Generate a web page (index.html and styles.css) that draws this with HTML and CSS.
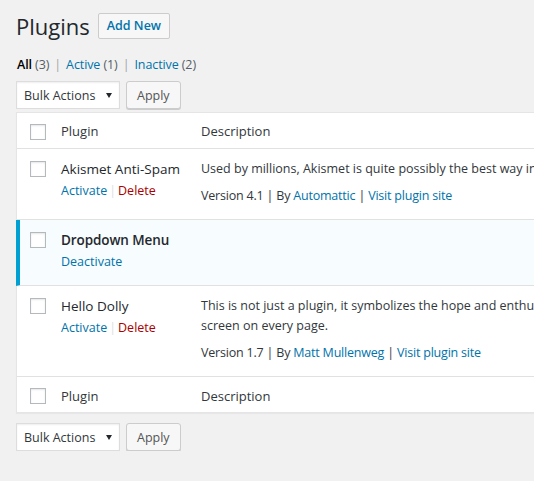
FILE: index.html
```html
<!DOCTYPE html>
<html lang="en">
<head>
<meta charset="utf-8">
<title>Plugins</title>
<link rel="stylesheet" href="styles.css">
</head>
<body>
<div class="wrap">
  <div class="page-head">
    <h1>Plugins</h1>
    <a class="page-title-action" href="#">Add New</a>
  </div>

  <ul class="subsubsub">
    <li><a class="current" href="#">All <span class="count">(3)</span></a><span class="sep">|</span></li>
    <li><a href="#">Active <span class="count">(1)</span></a><span class="sep">|</span></li>
    <li><a href="#">Inactive <span class="count">(2)</span></a></li>
  </ul>

  <div class="tablenav">
    <div class="select">
      <span>Bulk Actions</span>
      <svg class="arrow" width="6" height="5" viewBox="0 0 6 5"><polygon points="0,0 6,0 3,5" fill="#23282d"/></svg>
    </div>
    <button class="button" type="button">Apply</button>
  </div>

  <div class="plugins">
    <div class="row head">
      <div class="check"><input type="checkbox"></div>
      <div class="col-name">Plugin</div>
      <div class="col-desc">Description</div>
    </div>

    <div class="row">
      <div class="check"><input type="checkbox"></div>
      <div class="plugin-title">
        <strong>Akismet Anti-Spam</strong>
        <div class="row-actions"><a href="#">Activate</a><span class="sep">|</span><a class="delete" href="#">Delete</a></div>
      </div>
      <div class="desc">
        <p>Used by millions, Akismet is quite possibly the best way in the world to <strong class="plain">protect your blog from spam</strong>. It keeps your site protected even while you sleep. To get started: activate the Akismet plugin and then go to your Akismet Settings page to set up your API key.</p>
        <div class="version">Version 4.1 | By <a href="#">Automattic</a> | <a href="#">Visit plugin site</a></div>
      </div>
    </div>

    <div class="row active">
      <div class="check"><input type="checkbox"></div>
      <div class="plugin-title">
        <strong>Dropdown Menu</strong>
        <div class="row-actions"><a href="#">Deactivate</a></div>
      </div>
      <div class="desc"></div>
    </div>

    <div class="row">
      <div class="check"><input type="checkbox"></div>
      <div class="plugin-title">
        <strong>Hello Dolly</strong>
        <div class="row-actions"><a href="#">Activate</a><span class="sep">|</span><a class="delete" href="#">Delete</a></div>
      </div>
      <div class="desc">
        <p>This is not just a plugin, it symbolizes the hope and enthusiasm of an entire generation summed up in two words sung most famously by Louis Armstrong: Hello, Dolly. When activated you will randomly see a lyric from Hello, Dolly in the upper right of your admin<br>screen on every page.</p>
        <div class="version">Version 1.7 | By <a href="#">Matt Mullenweg</a> | <a href="#">Visit plugin site</a></div>
      </div>
    </div>

    <div class="row foot">
      <div class="check"><input type="checkbox"></div>
      <div class="col-name">Plugin</div>
      <div class="col-desc">Description</div>
    </div>
  </div>

  <div class="tablenav bottom">
    <div class="select">
      <span>Bulk Actions</span>
      <svg class="arrow" width="6" height="5" viewBox="0 0 6 5"><polygon points="0,0 6,0 3,5" fill="#23282d"/></svg>
    </div>
    <button class="button" type="button">Apply</button>
  </div>
</div>
</body>
</html>
```

FILE: styles.css
```css
html, body {
  margin: 0;
  overflow: hidden;
}

body {
  background: #f1f1f1;
  font-family: "Open Sans", "Noto Sans", sans-serif;
  font-size: 12.5px;
  color: #444;
}

a {
  color: #0073aa;
  text-decoration: none;
}

.wrap {
  padding: 12px 0 0 16px;
}

/* Title */
.page-head {
  display: flex;
  align-items: flex-start;
}

h1 {
  margin: 0;
  font-size: 22px;
  font-weight: 400;
  line-height: 29px;
  color: #23282d;
}

.page-title-action {
  margin: 1px 0 0 8px;
  padding: 4px 8px;
  line-height: 16px;
  border: 1px solid #ccc;
  border-radius: 2px;
  background: #f7f7f7;
  font-size: 12.5px;
  font-weight: 600;
}

/* Filter links */
.subsubsub {
  list-style: none;
  display: flex;
  margin: 15px 0 0;
  padding: 0 0 0 1px;
  line-height: 18px;
  color: #a0a5aa;
  letter-spacing: -0.1px;
}

.subsubsub .current {
  color: #000;
  font-weight: 600;
}

.subsubsub .count {
  color: #555d66;
  font-weight: 400;
}

.subsubsub .sep {
  margin: 0 5px;
}

/* Bulk actions */
.tablenav {
  display: flex;
  gap: 6px;
  margin-top: 7px;
}

.tablenav.bottom {
  margin-top: 10px;
}

.select {
  box-sizing: border-box;
  width: 104px;
  height: 28px;
  padding: 1px 7px 0;
  display: flex;
  align-items: center;
  justify-content: space-between;
  line-height: 25px;
  border: 1px solid #ddd;
  background: #fff;
  box-shadow: inset 0 1px 2px rgba(0, 0, 0, .07);
  color: #32373c;
}

.button {
  box-sizing: border-box;
  height: 28px;
  margin: 0;
  padding: 1px 10px 0;
  line-height: 25px;
  border: 1px solid #ccc;
  border-radius: 3px;
  background: #f7f7f7;
  box-shadow: 0 1px 0 #ccc;
  color: #555;
  font: inherit;
}

/* Plugins table */
.plugins {
  width: 1700px;
  margin-top: 3px;
  border: 1px solid #e5e5e5;
  background: #fff;
  box-shadow: 0 1px 1px rgba(0, 0, 0, .04);
}

.row {
  display: grid;
  grid-template-columns: 44px 140px 1fr;
  border-bottom: 1px solid #e1e1e1;
}

.row:last-child {
  border-bottom: 0;
}

.row.active {
  margin-left: -1px;
  border-left: 4px solid #00a0d2;
  background: #f7fcfe;
  grid-template-columns: 41px 140px 1fr;
}

.check {
  padding: 12px 0 0 13px;
}

.row.active .check {
  padding-left: 10px;
}

input[type="checkbox"] {
  appearance: none;
  -webkit-appearance: none;
  display: block;
  box-sizing: border-box;
  width: 16px;
  height: 16px;
  margin: 0;
  border: 1px solid #b4b9be;
  border-radius: 0;
  background: #fff;
  box-shadow: inset 0 1px 2px rgba(0, 0, 0, .1);
}

.row.head,
.row.foot {
  font-size: 13px;
  line-height: 20px;
  color: #32373c;
}

.row.head .col-name,
.row.head .col-desc {
  padding: 8px 0 7px;
}

.row.foot .col-name,
.row.foot .col-desc {
  padding: 9px 0 6px;
}

.row.head .check {
  padding-top: 11px;
}

.row.foot .check {
  padding-top: 11px;
}

.plugin-title {
  padding: 10px 12px 14px 0;
  white-space: nowrap;
}

.plugin-title strong {
  display: block;
  margin-bottom: 3px;
  font-size: 13.5px;
  font-weight: 400;
  line-height: 20px;
  color: #23282d;
}

.row.active .plugin-title strong {
  font-weight: 600;
  letter-spacing: -0.1px;
}

.row-actions {
  line-height: 18px;
}

.row-actions .sep {
  margin: 0 2px;
  color: #ddd;
}

.delete {
  color: #a00;
}

.desc {
  padding: 10px 0 13px;
  white-space: nowrap;
  line-height: 20px;
  color: #32373c;
}

.desc p {
  margin: 0;
}

.desc .plain {
  font-weight: 400;
}

.version {
  margin-top: 7px;
  letter-spacing: -0.2px;
}
```
